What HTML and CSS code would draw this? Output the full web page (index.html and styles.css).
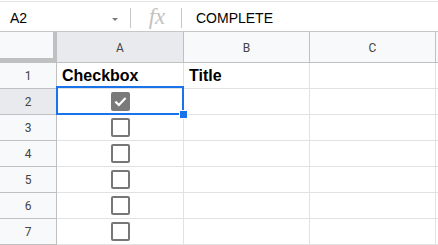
FILE: index.html
```html
<!DOCTYPE html>
<html lang="en">
<head>
    <meta charset="UTF-8">
    <meta name="viewport" content="width=device-width, initial-scale=1.0">
    <title>Checkbox sheet</title>
    <link rel="stylesheet" href="styles.css">
</head>
<body>

    <!-- Formula bar -->
    <div class="formula-bar">
        <div class="name-box">
            <span class="cell-ref">A2</span>
            <span class="caret"></span>
        </div>
        <div class="divider"></div>
        <div class="fx">fx</div>
        <div class="divider"></div>
        <div class="formula">COMPLETE</div>
    </div>

    <!-- Grid -->
    <div class="sheet">
        <div class="corner"></div>
        <div class="col-head selected">A</div>
        <div class="col-head">B</div>
        <div class="col-head">C</div>
        <div class="col-head edge"></div>

        <div class="row-head">1</div>
        <div class="cell bold">Checkbox</div>
        <div class="cell bold">Title</div>
        <div class="cell"></div>
        <div class="cell edge"></div>

        <div class="row-head selected">2</div>
        <div class="cell center active">
            <span class="checkbox checked">
                <svg viewBox="0 0 19 19" width="19" height="19">
                    <path d="M4.4 9.6 L7.9 13 L14.6 6.1" fill="none" stroke="#fff" stroke-width="2.2"/>
                </svg>
            </span>
            <div class="selection"><span class="handle"></span></div>
        </div>
        <div class="cell"></div>
        <div class="cell"></div>
        <div class="cell edge"></div>

        <div class="row-head">3</div>
        <div class="cell center"><span class="checkbox"></span></div>
        <div class="cell"></div>
        <div class="cell"></div>
        <div class="cell edge"></div>

        <div class="row-head">4</div>
        <div class="cell center"><span class="checkbox"></span></div>
        <div class="cell"></div>
        <div class="cell"></div>
        <div class="cell edge"></div>

        <div class="row-head">5</div>
        <div class="cell center"><span class="checkbox"></span></div>
        <div class="cell"></div>
        <div class="cell"></div>
        <div class="cell edge"></div>

        <div class="row-head">6</div>
        <div class="cell center"><span class="checkbox"></span></div>
        <div class="cell"></div>
        <div class="cell"></div>
        <div class="cell edge"></div>

        <div class="row-head">7</div>
        <div class="cell center"><span class="checkbox"></span></div>
        <div class="cell"></div>
        <div class="cell"></div>
        <div class="cell edge"></div>
    </div>

</body>
</html>
```

FILE: styles.css
```css
body {
    margin: 0;
    background-color: #fff;
    font-family: "Liberation Sans", Arial, sans-serif;
    color: #000;
    overflow: hidden;
}
.formula-bar {
    display: flex;
    align-items: center;
    height: 31px;
    margin-top: 1px;
    border-top: 1px solid #e3e3e3;
    border-bottom: 1px solid #c7c7c7;
    box-sizing: border-box;
    font-size: 14px;
}
.name-box {
    display: flex;
    justify-content: space-between;
    align-items: center;
    width: 130px;
    box-sizing: border-box;
    padding: 3px 12px 0 10px;
}
.caret {
    width: 0;
    height: 0;
    margin-top: 2px;
    border-left: 3px solid transparent;
    border-right: 3px solid transparent;
    border-top: 3px solid #7a7a7a;
}
.divider {
    width: 1px;
    height: 20px;
    margin-top: 3px;
    background-color: #c7c7c7;
}
.fx {
    width: 50px;
    text-align: center;
    font-family: "Liberation Serif", "Times New Roman", serif;
    font-style: italic;
    font-size: 23px;
    color: #c2c2c2;
    padding-left: 2px;
    box-sizing: border-box;
}
.formula {
    padding: 3px 0 0 14px;
}
.sheet {
    display: grid;
    grid-template-columns: 57px 127px 126px 126px 1fr;
    grid-template-rows: 31px repeat(7, 26px);
}
.sheet > div {
    box-sizing: border-box;
    border-right: 1px solid #e2e2e2;
    border-bottom: 1px solid #e2e2e2;
}
.corner {
    background-color: #f8f9fa;
    border-right: 4px solid #c0c0c0 !important;
    border-bottom: 5px solid #c0c0c0 !important;
}
.col-head {
    display: flex;
    align-items: center;
    justify-content: center;
    padding-top: 1px;
    background-color: #f8f9fa;
    border-right-color: #c0c0c0 !important;
    border-bottom-color: #c0c0c0 !important;
    font-family: Roboto, "Liberation Sans", sans-serif;
    font-size: 12px;
    color: #444;
}
.row-head {
    display: flex;
    align-items: center;
    justify-content: center;
    background-color: #f8f9fa;
    border-right: 1px solid #c0c0c0 !important;
    border-bottom-color: #c0c0c0 !important;
    font-family: Roboto, "Liberation Sans", sans-serif;
    font-size: 12px;
    color: #444;
}
.col-head.selected,
.row-head.selected {
    background-color: #e8eaed;
}
.cell {
    display: flex;
    align-items: center;
    padding-left: 5px;
}
.cell.bold {
    font-weight: bold;
    font-size: 16px;
}
.cell.center {
    justify-content: center;
    padding-left: 0;
}
.cell.active {
    position: relative;
}
.edge {
    border-right: none !important;
}
.checkbox {
    display: block;
    width: 19px;
    height: 19px;
    box-sizing: border-box;
    border: 2px solid #777;
    border-radius: 2px;
}
.checkbox.checked {
    border: none;
    background-color: #7a7a7a;
}
.checkbox svg {
    display: block;
}
.selection {
    position: absolute;
    top: -3px;
    left: -1px;
    right: -1px;
    bottom: -1px;
    border: 2px solid #1a73e8 !important;
    pointer-events: none;
}
.handle {
    position: absolute;
    right: -6px;
    bottom: -6px;
    width: 7px;
    height: 7px;
    background-color: #1a73e8;
    border: 1px solid #fff;
}
```
